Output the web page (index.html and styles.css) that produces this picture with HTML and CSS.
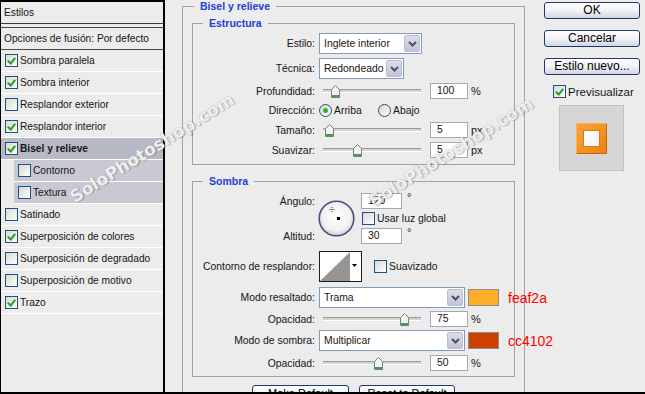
FILE: index.html
```html
<!DOCTYPE html>
<html lang="es">
<head>
    <meta charset="UTF-8">
    <meta name="viewport" content="width=device-width, initial-scale=1.0">
    <title>Estilo de capa</title>
    <link rel="stylesheet" href="styles.css">
</head>
<body>
    <svg class="defs" width="0" height="0" aria-hidden="true">
        <defs>
            <symbol id="chev" viewBox="0 0 9 6">
                <polyline points="1,1 4.5,4.5 8,1" fill="none" stroke="#46506e" stroke-width="2"/>
            </symbol>
            <symbol id="thumb" viewBox="0 0 9 13">
                <path d="M0.5 12.5 V4.5 L4.5 0.5 L8.5 4.5 V12.5 Z" fill="#f2f2f2" stroke="#7c7c7c"/>
                <rect x="1" y="10" width="7" height="2" fill="#38a447"/>
            </symbol>
            <radialGradient id="dialfill" cx="50%" cy="45%" r="55%">
                <stop offset="0" stop-color="#ffffff"/>
                <stop offset="0.75" stop-color="#f0f0f0"/>
                <stop offset="1" stop-color="#c9c9cf"/>
            </radialGradient>
        </defs>
    </svg>

    <div class="dialog">
        <div class="styles-list">
            <div class="list-head">Estilos</div>
            <div class="list-blend">Opciones de fusión: Por defecto</div>
            <div class="item"><span class="cb on"></span>Sombra paralela</div>
            <div class="item"><span class="cb on"></span>Sombra interior</div>
            <div class="item"><span class="cb"></span>Resplandor exterior</div>
            <div class="item"><span class="cb on"></span>Resplandor interior</div>
            <div class="item active"><span class="cb on"></span>Bisel y relieve</div>
            <div class="item sub"><span class="cb"></span>Contorno</div>
            <div class="item sub"><span class="cb"></span>Textura</div>
            <div class="item"><span class="cb"></span>Satinado</div>
            <div class="item"><span class="cb on"></span>Superposición de colores</div>
            <div class="item"><span class="cb"></span>Superposición de degradado</div>
            <div class="item"><span class="cb"></span>Superposición de motivo</div>
            <div class="item"><span class="cb on"></span>Trazo</div>
        </div>

        <div class="main">
            <fieldset class="group outer">
                <legend>Bisel y relieve</legend>

                <fieldset class="group inner structure">
                    <legend>Estructura</legend>
                    <div class="row tall">
                        <span class="lbl">Estilo:</span>
                        <div class="select estilo"><span>Inglete interior</span><span class="drop"><svg width="9" height="6"><use href="#chev"/></svg></span></div>
                    </div>
                    <div class="row tall">
                        <span class="lbl">Técnica:</span>
                        <div class="select tecnica"><span>Redondeado</span><span class="drop"><svg width="9" height="6"><use href="#chev"/></svg></span></div>
                    </div>
                    <div class="row">
                        <span class="lbl">Profundidad:</span>
                        <div class="slider"><div class="track"></div><svg class="thumb" style="left: 11%" width="9" height="13"><use href="#thumb"/></svg></div>
                        <span class="num">100</span><span class="unit">%</span>
                    </div>
                    <div class="row dir">
                        <span class="lbl">Dirección:</span>
                        <span class="opt"><span class="radio on"></span>Arriba</span>
                        <span class="opt"><span class="radio"></span>Abajo</span>
                    </div>
                    <div class="row">
                        <span class="lbl">Tamaño:</span>
                        <div class="slider"><div class="track"></div><svg class="thumb" style="left: 5.5%" width="9" height="13"><use href="#thumb"/></svg></div>
                        <span class="num">5</span><span class="unit">px</span>
                    </div>
                    <div class="row">
                        <span class="lbl">Suavizar:</span>
                        <div class="slider"><div class="track"></div><svg class="thumb" style="left: 32%" width="9" height="13"><use href="#thumb"/></svg></div>
                        <span class="num">5</span><span class="unit">px</span>
                    </div>
                </fieldset>

                <fieldset class="group inner shadow">
                    <legend>Sombra</legend>
                    <div class="angle">
                        <span class="lbl a-top">Ángulo:</span>
                        <svg class="dial" width="38" height="38" viewBox="0 0 38 38">
                            <circle cx="18.5" cy="18.5" r="17.3" fill="url(#dialfill)" stroke="#45507c" stroke-width="1.6"/>
                            <path d="M11.5 9.5 H16.5 M14 7 V12" stroke="#333" stroke-width="1" stroke-dasharray="1 1"/>
                            <rect x="19" y="17" width="3" height="3" fill="#000"/>
                        </svg>
                        <span class="field a-top"><span class="num wide">120</span><span class="deg">°</span></span>
                        <span class="check-line"><span class="cb"></span>Usar luz global</span>
                        <span class="lbl a-bottom">Altitud:</span>
                        <span class="field a-bottom"><span class="num wide">30</span><span class="deg">°</span></span>
                    </div>
                    <div class="row contour-row mt7">
                        <span class="lbl">Contorno de resplandor:</span>
                        <svg class="contour" width="43" height="31" viewBox="0 0 43 31">
                            <rect x="0.5" y="0.5" width="42" height="30" fill="#fff" stroke="#1e1e1e"/>
                            <polygon points="1,30 31,1 31,30" fill="#959595"/>
                            <polygon points="33,13 38,13 35.5,16" fill="#000"/>
                        </svg>
                        <span class="check-line soft"><span class="cb"></span>Suavizado</span>
                    </div>
                    <div class="row tall mt6">
                        <span class="lbl">Modo resaltado:</span>
                        <div class="select modo"><span>Trama</span><span class="drop"><svg width="9" height="6"><use href="#chev"/></svg></span></div>
                        <span class="swatch light"></span>
                        <span class="code">feaf2a</span>
                    </div>
                    <div class="row mt3">
                        <span class="lbl">Opacidad:</span>
                        <div class="slider"><div class="track"></div><svg class="thumb" style="left: 76%" width="9" height="13"><use href="#thumb"/></svg></div>
                        <span class="num">75</span><span class="unit">%</span>
                    </div>
                    <div class="row tall mt3">
                        <span class="lbl">Modo de sombra:</span>
                        <div class="select modo"><span>Multiplicar</span><span class="drop"><svg width="9" height="6"><use href="#chev"/></svg></span></div>
                        <span class="swatch dark"></span>
                        <span class="code">cc4102</span>
                    </div>
                    <div class="row">
                        <span class="lbl">Opacidad:</span>
                        <div class="slider"><div class="track"></div><svg class="thumb" style="left: 51%" width="9" height="13"><use href="#thumb"/></svg></div>
                        <span class="num">50</span><span class="unit">%</span>
                    </div>
                </fieldset>

                <div class="defaults">
                    <button class="btn make">Make Default</button>
                    <button class="btn reset">Reset to Default</button>
                </div>
            </fieldset>
        </div>

        <div class="side">
            <button class="btn">OK</button>
            <button class="btn">Cancelar</button>
            <button class="btn">Estilo nuevo...</button>
            <div class="preview-toggle"><span class="cb on"></span>Previsualizar</div>
            <div class="preview">
                <div class="preview-frame"><div class="preview-core"></div></div>
            </div>
        </div>

        <div class="wm wm1">SoloPhotoshop.com</div>
        <div class="wm wm2">SoloPhotoshop.com</div>
    </div>
</body>
</html>
```

FILE: styles.css
```css
* {
    box-sizing: border-box;
}
body {
    margin: 0;
    background: #ececec;
    font-family: "Liberation Sans", Arial, sans-serif;
    font-size: 10.4px;
    color: #151515;
}
.defs {
    position: absolute;
}
.dialog {
    position: relative;
    display: flex;
    width: 645px;
    height: 394px;
    overflow: hidden;
    background: #ececec;
    border-bottom: 2px solid #000;
}

/* left list */
.styles-list {
    flex: none;
    width: 165px;
    border: 2px solid #000;
    border-left-width: 1px;
    border-bottom: 0;
    font-size: 10.2px;
}
.list-head {
    height: 22px;
    line-height: 21px;
    padding-left: 3px;
    border-bottom: 1px solid #3c3c3c;
    margin-bottom: 3px;
}
.list-blend {
    height: 23px;
    line-height: 21px;
    padding-left: 3px;
    border-top: 1px solid #4a4a4a;
    border-bottom: 1px solid #4a4a4a;
}
.item {
    display: flex;
    align-items: center;
    height: 22px;
    padding-left: 4px;
    border-bottom: 1px solid #fff;
}
.item.active {
    background: #b7b9c5;
    font-weight: bold;
}
.item.sub {
    margin-left: 13px;
    background: #c8c9d2;
}
.cb {
    position: relative;
    flex: none;
    width: 13px;
    height: 13px;
    margin-right: 2px;
    border: 1px solid #1c5180;
    background: linear-gradient(135deg, #d9d9d3, #fdfdfd);
}
.cb.on::after {
    content: '';
    position: absolute;
    left: 3px;
    top: 1px;
    width: 3px;
    height: 6px;
    border: solid #21a121;
    border-width: 0 2px 2px 0;
    transform: rotate(40deg);
}

/* main area */
.main {
    flex: none;
    width: 360px;
    padding-left: 17px;
}
.group {
    margin: 0;
    min-width: 0;
    border: 1px solid #a2a2a2;
}
.group > legend {
    padding: 0 6px;
    font-weight: bold;
    font-size: 10.5px;
    color: #1d3fd6;
}
.outer {
    width: 343px;
    padding: 3px 9px 30px;
}
.outer > legend {
    margin-left: 2px;
    line-height: 13px;
}
.inner {
    padding: 3px 0 6px;
}
.inner > legend {
    margin-left: 10px;
    line-height: 14px;
}
.shadow {
    margin-top: 9px;
    padding-top: 5px;
    padding-bottom: 5px;
}

.row {
    display: flex;
    align-items: center;
    height: 16px;
    white-space: nowrap;
}
.row + .row {
    margin-top: 4px;
}
.row.tall {
    height: 21px;
}
.row.dir {
    height: 15px;
}
.row.mt3 {
    margin-top: 3px;
}
.row.mt6 {
    margin-top: 6px;
}
.row.mt7 {
    margin-top: 7px;
}
.lbl {
    flex: none;
    width: 122px;
    margin-right: 4px;
    text-align: right;
}

.select {
    position: relative;
    flex: none;
    display: flex;
    align-items: center;
    height: 21px;
    padding-left: 4px;
    border: 1px solid #7f9db9;
    background: #fff;
}
.select.estilo {
    width: 103px;
}
.select.tecnica {
    width: 85px;
}
.select.modo {
    width: 146px;
}
.drop {
    position: absolute;
    top: 1px;
    right: 1px;
    bottom: 1px;
    width: 16px;
    display: flex;
    align-items: center;
    justify-content: center;
    border: 1px solid #b9bdd2;
    border-radius: 2px;
    background: linear-gradient(#dcdde8, #c3c5d6);
}

.slider {
    position: relative;
    flex: none;
    width: 107px;
    height: 16px;
}
.track {
    position: absolute;
    left: 4px;
    right: 5px;
    top: 6px;
    height: 4px;
    border-top: 1px solid #999;
    border-bottom: 1px solid #fff;
    background: #d4d4d4;
}
.thumb {
    position: absolute;
    top: 2px;
}
.num {
    flex: none;
    display: block;
    width: 38px;
    height: 16px;
    line-height: 14px;
    padding-left: 6px;
    margin-left: 4px;
    border: 1px solid #a4a9b0;
    background: #fff;
}
.num.wide {
    width: 41px;
    margin-left: 0;
}
.unit {
    margin-left: 3px;
    font-size: 11px;
}

.opt {
    display: flex;
    align-items: center;
    width: 59px;
}
.radio {
    position: relative;
    flex: none;
    width: 13px;
    height: 13px;
    margin-right: 2px;
    border: 1px solid #1c5180;
    border-radius: 50%;
    background: linear-gradient(135deg, #d9d9d3, #fdfdfd);
}
.radio.on::after {
    content: '';
    position: absolute;
    left: 3px;
    top: 3px;
    width: 5px;
    height: 5px;
    border-radius: 50%;
    background: #2fb02f;
}

/* angle block */
.angle {
    display: grid;
    grid-template-columns: 122px 38px auto;
    grid-template-rows: 16px 13px 16px;
    column-gap: 4px;
    row-gap: 3px;
    align-items: center;
}
.angle .lbl {
    width: auto;
    margin-right: 0;
}
.a-top {
    grid-row: 1;
}
.a-bottom {
    grid-row: 3;
}
.angle .lbl.a-top,
.angle .lbl.a-bottom {
    grid-column: 1;
}
.dial {
    grid-column: 2;
    grid-row: 1 / 4;
    margin-left: -1px;
}
.field {
    grid-column: 3;
    display: flex;
    align-items: flex-start;
    height: 16px;
}
.deg {
    margin-left: 5px;
    margin-top: -2px;
    font-size: 11px;
}
.check-line {
    display: flex;
    align-items: center;
    white-space: nowrap;
}
.angle .check-line {
    grid-column: 3;
    grid-row: 2;
    margin-left: 1px;
}
.check-line.soft {
    margin-left: 12px;
}

.contour-row {
    height: 30px;
}
.contour {
    flex: none;
    margin-top: 1px;
}

.swatch {
    flex: none;
    width: 31px;
    height: 17px;
    margin-left: 3px;
    border: 1px solid #8c8c8c;
}
.swatch.light {
    background: #feaf2a;
}
.swatch.dark {
    background: #cc4102;
}
.code {
    margin-left: 9px;
    font-size: 14px;
    color: #f00;
}

.btn {
    display: block;
    padding: 0;
    border: 1px solid #1c3a6e;
    border-radius: 3px;
    background: linear-gradient(#ffffff, #f2f2f6 50%, #d3d4e2);
    font-family: "Liberation Sans", Arial, sans-serif;
    font-size: 12px;
    color: #000;
}
.defaults {
    display: flex;
    gap: 10px;
    margin: 8px 0 0 60px;
}
.defaults .btn {
    height: 23px;
    padding-bottom: 6px;
    font-size: 11px;
    line-height: 13px;
}
.btn.make {
    width: 97px;
}
.btn.reset {
    width: 96px;
}

/* right column */
.side {
    flex: none;
    display: flex;
    flex-direction: column;
    width: 120px;
    padding: 2px 0 0 19px;
}
.side .btn {
    width: 96px;
    height: 17px;
    line-height: 15px;
}
.side .btn + .btn {
    margin-top: 11px;
}
.preview-toggle {
    display: flex;
    align-items: center;
    margin: 10px 0 0 9px;
    font-size: 11.5px;
}
.preview {
    display: flex;
    align-items: center;
    justify-content: center;
    width: 65px;
    height: 66px;
    margin: 7px 0 0 15px;
    border: 1px solid #c2c2c2;
    background: #d6d6d6;
}
.preview-frame {
    width: 31px;
    height: 31px;
    padding: 6px;
    border: 1px solid;
    border-color: #fbb45a #c2670c #c2670c #fbb45a;
    background: linear-gradient(135deg, #fca23a, #f0820f);
}
.preview-core {
    width: 17px;
    height: 17px;
    border: 1px solid #e07a10;
    background: linear-gradient(135deg, #ffffff, #f3f3f3);
}

/* watermark */
.wm {
    position: absolute;
    white-space: nowrap;
    font-family: "DejaVu Sans", "Liberation Sans", sans-serif;
    font-weight: bold;
    font-size: 17px;
    color: rgba(255, 255, 255, 0.85);
    text-shadow: 0 0 1px #9a9a9a, 1px 1px 1px rgba(0, 0, 0, 0.25);
    transform: translate(-50%, -50%) rotate(-32deg);
}
.wm1 {
    left: 152px;
    top: 148px;
}
.wm2 {
    left: 451px;
    top: 152px;
}
```
